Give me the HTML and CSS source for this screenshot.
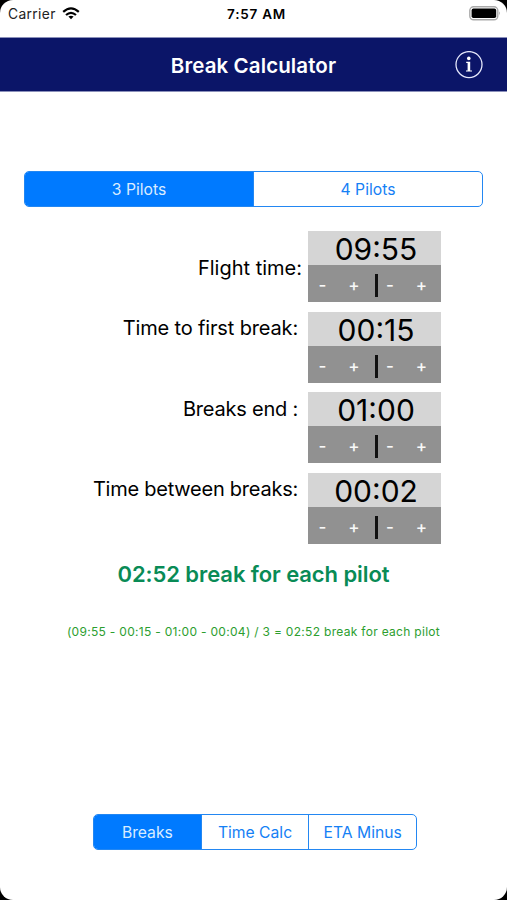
FILE: index.html
```html
<!DOCTYPE html>
<html lang="en">
<head>
<meta charset="utf-8">
<title>Break Calculator</title>
<link rel="stylesheet" href="styles.css">
</head>
<body>
<div class="screen">
  <div class="status">
    <div class="carrier"><span class="carrier-name">Carrier</span>
      <svg class="wifi" width="18" height="13" viewBox="0 0 18 13" fill="none" stroke="#000" stroke-width="2.2"><path d="M1.2 4.9Q9-2.1 16.8 4.9"/><path d="M4 8Q9 3.6 14 8"/><path d="M6.4 9.6Q9 7.7 11.6 9.6L9 12.3Z" fill="#000" stroke="none"/></svg>
    </div>
    <span class="clock">7:57 AM</span>
    <svg class="battery" width="32" height="15" viewBox="0 0 32 15"><rect x=".8" y=".8" width="28" height="13" rx="3.8" fill="#fff" stroke="#aaa" stroke-width="1.4"/><rect x="2.6" y="2.6" width="24.6" height="9.4" rx="1.8"/><path d="M30.2 5.2Q32 7.3 30.2 9.4Z" fill="#999"/></svg>
  </div>
  <header class="navbar">
    <h1 class="title">Break Calculator</h1>
    <svg class="info" width="28" height="28" viewBox="0 0 28 28"><circle cx="14" cy="13.6" r="13" fill="none" stroke="#e4e6fa" stroke-width="1.3"/><circle cx="13.8" cy="7.4" r="1.8" fill="#fff"/><path d="M11.2 10.8H15.2V19.4H17V20.6H11V19.4H12.6V12H11.2Z" fill="#fff"/></svg>
  </header>
  <div class="segments pilots"><span class="segment active">3 Pilots</span><span class="segment">4 Pilots</span></div>
  <main class="rows">
    <div class="row"><span class="label label-flight">Flight time:</span><div class="stepper"><div class="value">09:55</div><div class="keys"><span>-</span><span>+</span><i class="bar"></i><span>-</span><span>+</span></div></div></div>
    <div class="row"><span class="label label-first">Time to first break:</span><div class="stepper"><div class="value">00:15</div><div class="keys"><span>-</span><span>+</span><i class="bar"></i><span>-</span><span>+</span></div></div></div>
    <div class="row"><span class="label label-end">Breaks end :</span><div class="stepper"><div class="value">01:00</div><div class="keys"><span>-</span><span>+</span><i class="bar"></i><span>-</span><span>+</span></div></div></div>
    <div class="row"><span class="label label-between">Time between breaks:</span><div class="stepper"><div class="value">00:02</div><div class="keys"><span>-</span><span>+</span><i class="bar"></i><span>-</span><span>+</span></div></div></div>
  </main>
  <p class="result">02:52 break for each pilot</p>
  <p class="formula">(09:55 - 00:15 - 01:00 - 00:04) / 3 = 02:52 break for each pilot</p>
  <nav class="segments tabs"><span class="segment active">Breaks</span><span class="segment">Time Calc</span><span class="segment">ETA Minus</span></nav>
</div>
</body>
</html>
```
FILE: styles.css
```css
* { box-sizing: border-box; }
body { margin: 0; background: #000; font-family: Inter, "Liberation Sans", sans-serif; }
.screen { height: 900px; background: #fff; border-radius: 13px; overflow: hidden; display: flex; flex-direction: column; white-space: nowrap; }
.status { height: 37px; flex: none; display: grid; grid-template-columns: 1fr auto 1fr; padding: 6px 6px 0 8px; align-items: start; }
.carrier { display: flex; align-items: center; gap: 6px; height: 15px; color: #222; font-size: 13.8px; letter-spacing: .35px; }
.clock { font-size: 13.5px; font-weight: 600; line-height: 16px; letter-spacing: .75px; padding-left: 3px; margin-right: -1px; }
.battery { justify-self: end; }
.navbar { height: 55px; flex: none; background: #0b1568; border-top: 1px solid #8b90ba; border-bottom: 1px solid #8b90ba; display: grid; grid-template-columns: 1fr auto 1fr; align-items: center; padding: 0 24px; }
.title { grid-column: 2; margin: 0; color: #fff; font-size: 20.5px; font-weight: 600; line-height: 26px; letter-spacing: .1px; padding-top: 2px; }
.info { justify-self: end; }
.segments { display: flex; flex: none; border: 1px solid #2387f2; border-radius: 5px; overflow: hidden; color: #1580f5; font-size: 15.7px; line-height: 36px; height: 36px; }
.segment { flex: 1; text-align: center; }
.segment + .segment { border-left: 1px solid #2387f2; }
.active { background: #007aff; color: #d9ecff; }
.pilots { margin: 79px 24px 0; }
.rows { margin-top: 24px; }
.row { display: grid; grid-template-columns: 298px 133px; column-gap: 10px; height: 71px; margin-bottom: 10px; }
.row:nth-child(2) { margin-bottom: 9px; }
.row:last-child { margin-bottom: 0; }
.label { justify-self: end; font-size: 20px; line-height: 24px; padding-top: 4px; letter-spacing: -.15px; }
.label-flight { padding-top: 25px; margin-right: -4px; letter-spacing: 0; }
.label-end { padding-top: 5px; letter-spacing: -.22px; }
.label-between { letter-spacing: -.24px; }
.stepper { background: #919191; }
.value { height: 34px; line-height: 36px; background: #d5d5d5; font-size: 30px; text-align: center; padding-left: 3px; }
.keys { height: 37px; display: grid; grid-template-columns: 29px 34px 11px 16px 47px; justify-items: center; align-items: center; padding-top: 3px; color: #f8f8f8; font-size: 17px; font-weight: 500; line-height: 20px; }
.bar { width: 3px; height: 23px; background: #111; }
.result { margin: 16px 0 0; text-align: center; color: #098b56; font-size: 22px; font-weight: 600; line-height: 28px; letter-spacing: -.08px; }
.formula { margin: 36px 0 0; text-align: center; color: #2c9e2f; font-size: 12px; line-height: 16px; letter-spacing: .3px; }
.tabs { margin: auto 90px 50px 93px; }
```
